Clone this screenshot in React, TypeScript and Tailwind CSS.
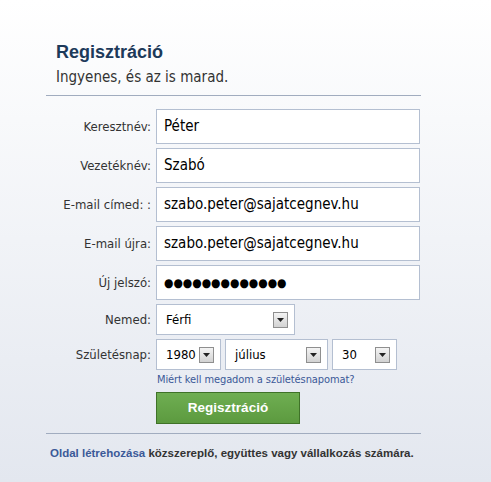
import React from 'react';

const FONT = "'DejaVu Sans Condensed', Tahoma, 'DejaVu Sans', sans-serif";
const BOLD = "'Liberation Sans', Arial, sans-serif";

const fields = [
  { label: 'Keresztnév:', value: 'Péter' },
  { label: 'Vezetéknév:', value: 'Szabó' },
  { label: 'E-mail címed: :', value: 'szabo.peter@sajatcegnev.hu' },
  { label: 'E-mail újra:', value: 'szabo.peter@sajatcegnev.hu' },
];

const Arrow = () => (
  <div className="w-[15px] h-[16px] border border-[#8f8f8f] bg-gradient-to-b from-[#f4f4f4] to-[#d2d2d2] flex items-center justify-center shrink-0">
    <svg width="7" height="4" viewBox="0 0 7 4">
      <path d="M0 0h7L3.5 4z" fill="#222" />
    </svg>
  </div>
);

const FakeSelect = ({ value, className }: { value: string; className: string }) => (
  <div className={`h-[31px] bg-white border border-[#b4bfd1] flex items-center justify-between pl-[9px] pr-[6px] text-[13px] text-black ${className}`}>
    <span>{value}</span>
    <Arrow />
  </div>
);

const Label = ({ children }: { children: React.ReactNode }) => (
  <div className="w-[110px] shrink-0 text-right pr-[5px] text-[13px] text-[#333]">{children}</div>
);

const Field = ({ children }: { children: React.ReactNode }) => (
  <div className="h-[35px] w-[264px] bg-white border border-[#b4bfd1] flex items-center pl-[7px] text-[15px] text-black">
    {children}
  </div>
);

export default function App() {
  return (
    <div
      className="w-[491px] h-[482px] bg-gradient-to-b from-[#ffffff] to-[#e3e7ef] overflow-hidden"
      style={{ fontFamily: FONT }}
    >
      <div className="ml-[46px] w-[375px] pt-[40px]">
        <div className="pl-[10px]">
          <h1 className="text-[18px] font-bold text-[#1d3a5a] leading-[24px]" style={{ fontFamily: BOLD }}>
            Regisztráció
          </h1>
          <p className="text-[15px] text-[#333] leading-[20px] mt-[3px]">Ingyenes, és az is marad.</p>
        </div>
        <div className="mt-[8px] h-px bg-[#a1acbf]" />

        <div className="mt-[13px] flex flex-col gap-[4px]">
          {fields.map((f) => (
            <div key={f.label} className="flex items-center">
              <Label>{f.label}</Label>
              <Field>{f.value}</Field>
            </div>
          ))}
          <div className="flex items-center">
            <Label>Új jelszó:</Label>
            <Field>
              <span className="text-[12px]">●●●●●●●●●●●●●</span>
            </Field>
          </div>
          <div className="flex items-center">
            <Label>Nemed:</Label>
            <FakeSelect value="Férfi" className="w-[139px]" />
          </div>
          <div className="flex items-center">
            <Label>Születésnap:</Label>
            <div className="flex gap-[4px]">
              <FakeSelect value="1980" className="w-[65px]" />
              <FakeSelect value="július" className="w-[103px]" />
              <FakeSelect value="30" className="w-[65px]" />
            </div>
          </div>
        </div>

        <div className="pl-[110px]">
          <a className="block mt-[3px] pl-px text-[11px] text-[#3b5998] leading-[14px] tracking-[-0.1px]">
            Miért kell megadom a születésnapomat?
          </a>
          <button
            className="mt-[5px] w-[144px] h-[32px] bg-gradient-to-b from-[#6fae52] to-[#5c9a3f] border border-[#3f7228] text-white font-bold text-[13.5px]"
            style={{ fontFamily: BOLD }}
          >
            Regisztráció
          </button>
        </div>

        <div className="mt-[9px] h-px bg-[#a1acbf]" />
        <p
          className="mt-[11px] pl-[4px] text-[11.5px] font-bold text-[#333] whitespace-nowrap"
          style={{ fontFamily: BOLD }}
        >
          <span className="text-[#3b5998]">Oldal létrehozása</span> közszereplő, együttes vagy vállalkozás számára.
        </p>
      </div>
    </div>
  );
}
